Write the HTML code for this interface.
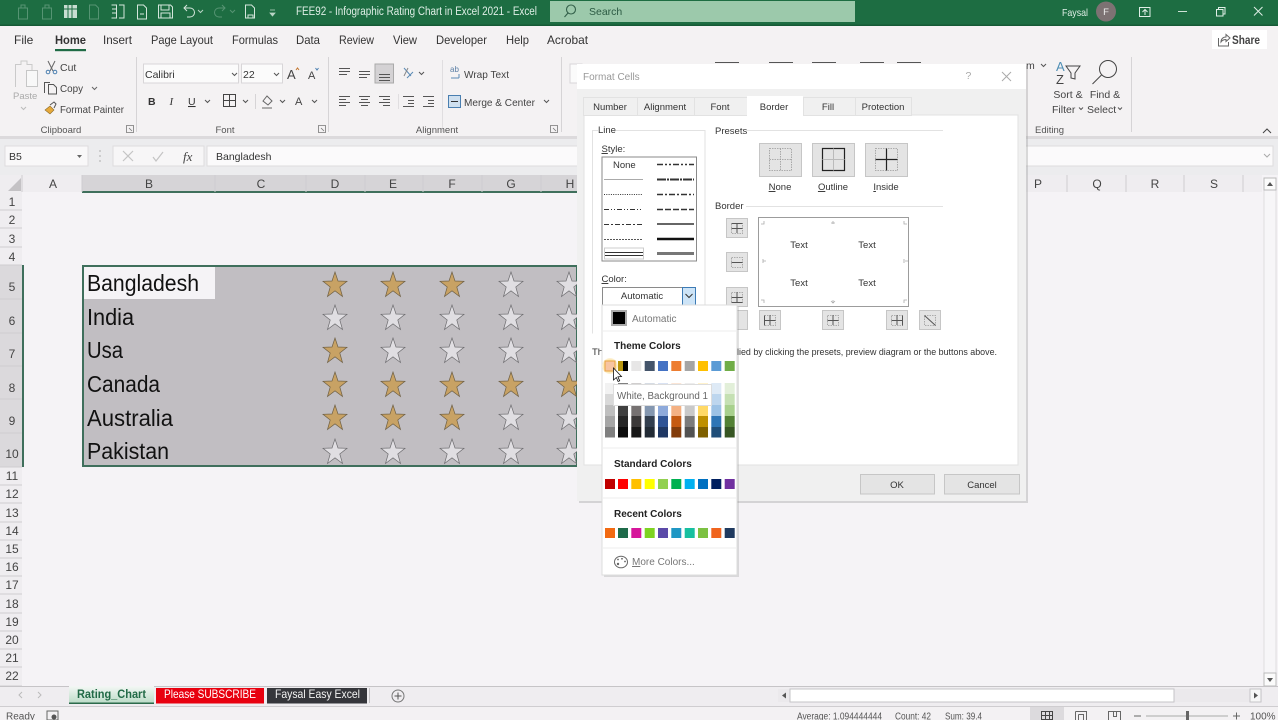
<!DOCTYPE html>
<html><head><meta charset="utf-8"><title>FEE92 - Infographic Rating Chart in Excel 2021 - Excel</title>
<style>
html,body{margin:0;padding:0;width:1278px;height:720px;overflow:hidden;background:#f5f3f6}
svg{display:block;filter:blur(.3px)}
text{font-family:"Liberation Sans",sans-serif;font-size:10.5px;fill:#3c3a3c}
.rb{font-size:10.5px;fill:#444}
.gp{font-size:9.5px;fill:#555}
.tab{font-size:12px;fill:#333}
.h{font-size:12px;fill:#444;text-anchor:middle}
.d{font-size:9.5px;fill:#333}
.c{text-anchor:middle}
.big{font-size:23px;fill:#111}
.ic{fill:none;stroke:#555;stroke-width:1}
.w{fill:none;stroke:#d5e6dc;stroke-width:1}
.f{fill:none;stroke:#569473;stroke-width:1}
.b{font-weight:bold;fill:#222;font-size:10px}
</style></head><body>
<svg width="1278" height="720" viewBox="0 0 1278 720" xmlns="http://www.w3.org/2000/svg">
<defs>
<polygon id="s" points="12,0 15,9 24,9.3 16.8,15 19.5,24.5 12,18.8 4.500,24.500 7.2,15 0,9.3 9,9"/>
<linearGradient id="tg" x1="0" y1="0" x2="0" y2="1"><stop offset="0" stop-color="#f4f7f5"/><stop offset="1" stop-color="#bcdcc8"/></linearGradient>
<radialGradient id="glow"><stop offset="0" stop-color="#f9c9a0"/><stop offset=".75" stop-color="#fbe6ae"/><stop offset="1" stop-color="#fdf3dc"/></radialGradient>
</defs>

<!-- sheet -->
<rect width="1278" height="720" fill="#f5f3f6"/>
<rect x="0" y="175" width="1264" height="17" fill="#efedf0"/>
<rect x="82" y="175" width="495" height="17" fill="#d6d4d7"/>
<rect x="82" y="191" width="495" height="2" fill="#3f6f5c"/>
<rect x="0" y="192" width="22" height="494" fill="#efedf0"/>
<rect x="0" y="265" width="22" height="202" fill="#dbd9dc"/>
<rect x="22" y="265" width="2" height="202" fill="#3f6f5c"/>
<polygon points="21,178 21,191 8,191" fill="#c4c2c5"/>
<g stroke="#cfcdd0" stroke-width="1">
<path d="M22 175V192M82 175V192M215 175V192M306 175V192M365 175V192M423 175V192M482 175V192M541 175V192M1008 175V192M1067 175V192M1126 175V192M1184 175V192M1243 175V192"/>
<path d="M0 210H22M0 228H22M0 247H22M0 265H22M0 299H22M0 333H22M0 366H22M0 399H22M0 433H22M0 467H22M0 485H22M0 503H22M0 522H22M0 540H22M0 558H22M0 576H22M0 594H22M0 613H22M0 631H22M0 649H22M0 667H22M0 686H22"/>
</g>
<g class="h">
<text class="h" x="53" y="188">A</text><text class="h" x="149" y="188">B</text><text class="h" x="261" y="188">C</text><text class="h" x="335" y="188">D</text><text class="h" x="393" y="188">E</text><text class="h" x="452" y="188">F</text><text class="h" x="511" y="188">G</text><text class="h" x="570" y="188">H</text><text class="h" x="1038" y="188">P</text><text class="h" x="1097" y="188">Q</text><text class="h" x="1155" y="188">R</text><text class="h" x="1214" y="188">S</text>
<text class="h" x="12" y="206">1</text><text class="h" x="12" y="224">2</text><text class="h" x="12" y="243">3</text><text class="h" x="12" y="261">4</text><text class="h" x="12" y="291">5</text><text class="h" x="12" y="325">6</text><text class="h" x="12" y="358">7</text><text class="h" x="12" y="392">8</text><text class="h" x="12" y="425">9</text><text class="h" x="12" y="458">10</text><text class="h" x="12" y="480">11</text><text class="h" x="12" y="498">12</text><text class="h" x="12" y="517">13</text><text class="h" x="12" y="535">14</text><text class="h" x="12" y="553">15</text><text class="h" x="12" y="571">16</text><text class="h" x="12" y="589">17</text><text class="h" x="12" y="608">18</text><text class="h" x="12" y="626">19</text><text class="h" x="12" y="644">20</text><text class="h" x="12" y="662">21</text><text class="h" x="12" y="680">22</text>
</g>
<rect x="83" y="266" width="494" height="200" fill="#c1bec2" stroke="#3f6f5c" stroke-width="2"/>
<rect x="84" y="267" width="131" height="32" fill="#f5f3f6"/>
<text class="big" x="87" y="291" textLength="112" lengthAdjust="spacingAndGlyphs">Bangladesh</text>
<text class="big" x="87" y="325" textLength="47" lengthAdjust="spacingAndGlyphs">India</text>
<text class="big" x="87" y="358" textLength="36" lengthAdjust="spacingAndGlyphs">Usa</text>
<text class="big" x="87" y="392" textLength="73" lengthAdjust="spacingAndGlyphs">Canada</text>
<text class="big" x="87" y="426" textLength="86" lengthAdjust="spacingAndGlyphs">Australia</text>
<text class="big" x="87" y="459" textLength="82" lengthAdjust="spacingAndGlyphs">Pakistan</text>
<g fill="#c8a264" stroke="#6f6045" stroke-width=".7">
<use href="#s" x="323" y="272"/><use href="#s" x="381" y="272"/><use href="#s" x="440" y="272"/>
<use href="#s" x="323" y="338"/>
<use href="#s" x="323" y="372"/><use href="#s" x="381" y="372"/><use href="#s" x="440" y="372"/><use href="#s" x="499" y="372"/><use href="#s" x="557" y="372"/>
<use href="#s" x="323" y="405"/><use href="#s" x="381" y="405"/><use href="#s" x="440" y="405"/>
</g>
<g fill="#e0dee2" stroke="#6e6d70" stroke-width=".7">
<use href="#s" x="499" y="272"/><use href="#s" x="557" y="272"/>
<use href="#s" x="323" y="305"/><use href="#s" x="381" y="305"/><use href="#s" x="440" y="305"/><use href="#s" x="499" y="305"/><use href="#s" x="557" y="305"/>
<use href="#s" x="381" y="338"/><use href="#s" x="440" y="338"/><use href="#s" x="499" y="338"/><use href="#s" x="557" y="338"/>
<use href="#s" x="499" y="405"/><use href="#s" x="557" y="405"/>
<use href="#s" x="323" y="439"/><use href="#s" x="381" y="439"/><use href="#s" x="440" y="439"/><use href="#s" x="499" y="439"/><use href="#s" x="557" y="439"/>
</g>

<!-- vertical scrollbar -->
<rect x="1262" y="175" width="16" height="511" fill="#f5f3f6"/>
<rect x="1264" y="178" width="12" height="508" fill="#f7f6f8" stroke="#cfcdd0" stroke-width=".6"/>
<rect x="1264" y="178" width="12" height="12" fill="#fbfbfb" stroke="#bbb"/>
<polygon points="1267,186 1273,186 1270,182" fill="#555"/>
<rect x="1264" y="673" width="12" height="13" fill="#fbfbfb" stroke="#bbb"/>
<polygon points="1267,678 1273,678 1270,682" fill="#555"/>

<!-- bottom -->
<rect x="0" y="686" width="1278" height="1.5" fill="#c6c4c7"/>
<rect x="0" y="687" width="1278" height="19" fill="#efedf0"/>
<rect x="0" y="706" width="1278" height="1" fill="#cfcdd0"/>
<rect x="0" y="707" width="1278" height="13" fill="#f3f1f3"/>
<path d="M22 692l-3 3 3 3M38 692l3 3-3 3" fill="none" stroke="#bbb" stroke-width="1"/>
<rect x="69" y="686" width="85" height="17" fill="url(#tg)"/>
<rect x="69" y="702.5" width="85" height="1.5" fill="#2c6a4b"/>
<text x="77" y="698" style="font-size:12px;font-weight:bold;fill:#216a46" textLength="69" lengthAdjust="spacingAndGlyphs">Rating_Chart</text>
<rect x="156" y="688" width="108" height="15.5" fill="#e8000f"/>
<text x="164" y="698" style="font-size:12px;fill:#fff" textLength="92" lengthAdjust="spacingAndGlyphs">Please SUBSCRIBE</text>
<rect x="267" y="688" width="100" height="15.5" fill="#35363b"/>
<text x="275" y="698" style="font-size:12px;fill:#f4f4f4" textLength="85" lengthAdjust="spacingAndGlyphs">Faysal Easy Excel</text>
<path d="M369.500 688V703" stroke="#c4c2c5"/>
<circle cx="398" cy="696" r="6" fill="none" stroke="#777"/>
<path d="M394.500 696H401.500M398 692.500V699.500" stroke="#555"/>
<rect x="778" y="689" width="484" height="13" fill="#ebe9ec"/>
<rect x="790" y="689" width="384" height="13" fill="#fff" stroke="#c6c4c7"/>
<polygon points="786,692.500 786,698.500 782,695.500" fill="#555"/>
<rect x="1250" y="689" width="11" height="13" fill="#f7f7f7" stroke="#c6c4c7"/>
<polygon points="1254,692.500 1254,698.500 1258,695.500" fill="#555"/>
<text x="6" y="719.500" style="font-size:10px;fill:#555">Ready</text>
<rect x="47" y="711" width="11" height="9" fill="none" stroke="#666"/><circle cx="54" cy="717" r="2.500" fill="#555"/>
<text x="797" y="719.500" style="font-size:10px;fill:#555" textLength="85" lengthAdjust="spacingAndGlyphs">Average: 1.094444444</text>
<text x="895" y="719.500" style="font-size:10px;fill:#555" textLength="36" lengthAdjust="spacingAndGlyphs">Count: 42</text>
<text x="945" y="719.500" style="font-size:10px;fill:#555" textLength="37" lengthAdjust="spacingAndGlyphs">Sum: 39.4</text>
<rect x="1030" y="707" width="34" height="13" fill="#dcdadd"/>
<path d="M1041.500 711.500H1052.500M1041.500 715.500H1052.500M1041.500 719.500H1052.500M1041.500 711V720M1045.500 711V720M1049.500 711V720M1052.500 711V720" stroke="#444" fill="none"/>
<path d="M1075.500 711.500H1086.500V720M1075.500 711.500V720M1078.500 714.500H1083.500V720M1078.500 714.500V720" stroke="#666" fill="none"/>
<path d="M1108.500 720V711.500H1120.500V720M1113.500 711.500V716.500H1116.500V711.500" stroke="#666" fill="none"/>
<path d="M1134 716H1141M1233 716H1240M1236.500 712.500V719.500" stroke="#666"/>
<rect x="1146" y="715.500" width="82" height="1" fill="#aaa"/>
<rect x="1186" y="711" width="3" height="9" fill="#666"/>
<text x="1250" y="719.500" style="font-size:10px;fill:#555">100%</text>

<!-- formula bar -->
<rect x="0" y="136" width="1278" height="39" fill="#ececee"/>
<rect x="0" y="136" width="1278" height="3" fill="#dcdadc"/>
<rect x="5" y="146" width="83" height="20" fill="#f9f8f9" stroke="#dedcde"/>
<text x="9" y="160" style="font-size:10.500px;fill:#333">B5</text>
<polygon points="77,155 82,155 79.500,158" fill="#666"/>
<path d="M100 150.500v1M100 155.500v1M100 160.500v1" stroke="#999" stroke-width="1.500"/>
<rect x="113" y="146" width="91" height="20" fill="#f7f6f7" stroke="#dedcde"/>
<path d="M123 151l10 10M133 151l-10 10" stroke="#c4c4c4" stroke-width="1.200"/>
<path d="M153 157l3 4 7-9" stroke="#c4c4c4" stroke-width="1.200" fill="none"/>
<text x="183" y="161" style="font-family:'Liberation Serif',serif;font-style:italic;font-size:13px;fill:#444">fx</text>
<rect x="207" y="146" width="1066" height="20" fill="#fbfafb" stroke="#dedcde"/>
<text x="216" y="160" style="font-size:10.500px;fill:#333">Bangladesh</text>
<path d="M1264 154l3 3 3-3" stroke="#aaa" fill="none"/>

<!-- ribbon -->
<rect x="0" y="26" width="1278" height="110" fill="#f4f2f3"/>
<g class="tab">
<text class="tab" x="14" y="44">File</text>
<text class="tab" x="55" y="44" style="font-weight:bold;fill:#333" textLength="31" lengthAdjust="spacingAndGlyphs">Home</text>
<text class="tab" x="103" y="44" textLength="29" lengthAdjust="spacingAndGlyphs">Insert</text>
<text class="tab" x="151" y="44" textLength="62" lengthAdjust="spacingAndGlyphs">Page Layout</text>
<text class="tab" x="232" y="44" textLength="46" lengthAdjust="spacingAndGlyphs">Formulas</text>
<text class="tab" x="296" y="44" textLength="24" lengthAdjust="spacingAndGlyphs">Data</text>
<text class="tab" x="339" y="44" textLength="35" lengthAdjust="spacingAndGlyphs">Review</text>
<text class="tab" x="393" y="44" textLength="24" lengthAdjust="spacingAndGlyphs">View</text>
<text class="tab" x="436" y="44" textLength="51" lengthAdjust="spacingAndGlyphs">Developer</text>
<text class="tab" x="506" y="44" textLength="23" lengthAdjust="spacingAndGlyphs">Help</text>
<text class="tab" x="547" y="44" textLength="41" lengthAdjust="spacingAndGlyphs">Acrobat</text>
</g>
<rect x="55" y="49" width="31" height="2.200" fill="#1f6b45"/>
<rect x="1212" y="30" width="55" height="19" fill="#fff"/>
<path d="M1218.500 38v8h10v-4M1221 42c0-3 2-5 5-5v-2.500l4 3.500-4 3.500v-2c-2 0-4 1-5 2.500z" fill="none" stroke="#666"/>
<text x="1232" y="44" style="font-size:12px;font-weight:bold;fill:#444" textLength="28" lengthAdjust="spacingAndGlyphs">Share</text>

<!-- Clipboard -->
<path d="M15.500 87V64.500H21V61h6v3.500h5V70" fill="none" stroke="#cacaca"/>
<rect x="26.500" y="70.500" width="11" height="16" fill="#f8f8f8" stroke="#c6c6c6"/>
<text x="13" y="99" style="font-size:9.500px;fill:#aaa">Paste</text>
<path d="M21 107l2.500 2.500 2.500-2.500" fill="none" stroke="#bbb"/>
<path d="M48 61l5 10M55 61l-5 10" fill="none" stroke="#666"/><circle cx="48" cy="72" r="1.800" fill="none" stroke="#4a7fb0"/><circle cx="55" cy="72" r="1.800" fill="none" stroke="#4a7fb0"/>
<text class="rb" x="60" y="71">Cut</text>
<path d="M44.500 93V82.500H50M48.500 84.500h5l3 3v6.500h-8z" fill="none" stroke="#555"/>
<text class="rb" x="60" y="92" textLength="23" lengthAdjust="spacingAndGlyphs">Copy</text>
<path d="M92 87l2.500 2.500 2.500-2.500" fill="none" stroke="#666"/>
<path d="M45 110l5-4 4 4-4 4z" fill="#e6a93a" stroke="#8a6a2a" stroke-width=".6"/><path d="M50 105l4-3 2 2-2 4" fill="none" stroke="#555"/>
<text class="rb" x="60" y="113" textLength="64" lengthAdjust="spacingAndGlyphs">Format Painter</text>
<text class="gp c" x="61" y="133">Clipboard</text>
<path d="M126.500 125.500h7v7h-7zM129 128l3 3" fill="none" stroke="#777" stroke-width=".8"/>
<path d="M136.500 57V132" stroke="#d6d4d6"/>

<!-- Font -->
<rect x="143.500" y="64" width="95" height="19" fill="#fbfbfb" stroke="#d8d6d8"/>
<text x="145" y="78" style="font-size:10.500px;fill:#333">Calibri</text>
<path d="M232 73l2.500 2.500 2.500-2.500" fill="none" stroke="#555"/>
<rect x="241.500" y="64" width="41" height="19" fill="#fbfbfb" stroke="#d8d6d8"/>
<text x="243" y="78" style="font-size:10.500px;fill:#333">22</text>
<path d="M274 73l2.500 2.500 2.500-2.500" fill="none" stroke="#555"/>
<text x="287" y="79" style="font-size:13px;fill:#444">A</text><path d="M296 70l1.500-2 1.500 2" stroke="#c2752d" fill="none"/>
<text x="308" y="79" style="font-size:11px;fill:#444">A</text><path d="M315.500 68l1.500 2 1.500-2" stroke="#4a7fb0" fill="none"/>
<text x="148" y="105" style="font-size:10.500px;font-weight:bold;fill:#333">B</text>
<text x="169.500" y="105" style="font-family:'Liberation Serif',serif;font-style:italic;font-size:11px;fill:#333">I</text>
<text x="188" y="105" style="font-size:10.500px;fill:#333;text-decoration:underline">U</text>
<path d="M205 100l2.500 2.500 2.500-2.500M243 100l2.500 2.500 2.500-2.500M280 100l2.500 2.500 2.500-2.500M312 100l2.500 2.500 2.500-2.500" fill="none" stroke="#555"/>
<path d="M223.500 94.500h12v12h-12zM229.500 94.500v12M223.500 100.500h12" fill="none" stroke="#444"/>
<path d="M255.500 94V109" stroke="#d6d4d6"/>
<path d="M267 96l5 5-4 4-5-4zM262 108h10" fill="none" stroke="#666"/>
<text x="295" y="105" style="font-size:11px;fill:#444">A</text>
<text class="gp c" x="225" y="133">Font</text>
<path d="M318.500 125.500h7v7h-7zM321 128l3 3" fill="none" stroke="#777" stroke-width=".8"/>
<path d="M328.500 57V132" stroke="#d6d4d6"/>

<!-- Alignment -->
<rect x="375" y="64" width="18.500" height="19" fill="#d4d2d4" stroke="#aaa"/>
<path class="ic" d="M339 68.500h11M339 71.500h11M339 74.500h8M359 71.500h11M359 74.500h11M359 77.500h8M379 74.500h11M379 77.500h11M379 80.500h11"/>
<path d="M404 68l7 8M407 78l6-6" fill="none" stroke="#5b8bb5"/><path d="M404 76l4-8" stroke="#888"/>
<path d="M419 72l2.500 2.500 2.500-2.500" fill="none" stroke="#555"/>
<path d="M442.500 60V132" stroke="#e0dee0"/>
<text x="450" y="72" style="font-size:8px;fill:#5b7fa5">ab</text><path d="M451 78h8M459 74v4" fill="none" stroke="#5b8bb5"/>
<text class="rb" x="464" y="78" textLength="45" lengthAdjust="spacingAndGlyphs">Wrap Text</text>
<path class="ic" d="M339 96.500h11M339 99.500h7M339 102.500h11M339 105.500h7M359 96.500h11M361 99.500h7M359 102.500h11M361 105.500h7M379 96.500h11M383 99.500h7M379 102.500h11M383 105.500h7M403 96.500h11M408 100.500h6M408 103.500h6M403 106.500h11M423 96.500h11M428 100.500h6M428 103.500h6M423 106.500h11"/>
<path d="M398.500 94V109" stroke="#e0dee0"/>
<path d="M448.500 95.500h12v12h-12z" fill="#cfe0ef" stroke="#4a7fb0"/><path d="M451 101.500h7" stroke="#333"/>
<text class="rb" x="464" y="106" textLength="71" lengthAdjust="spacingAndGlyphs">Merge &amp; Center</text>
<path d="M544 100l2.500 2.500 2.500-2.500" fill="none" stroke="#555"/>
<text class="gp c" x="437" y="133">Alignment</text>
<path d="M550.500 125.500h7v7h-7zM553 128l3 3" fill="none" stroke="#777" stroke-width=".8"/>
<path d="M561.500 57V132" stroke="#d6d4d6"/>
<rect x="570" y="64" width="12" height="19" fill="#fbfbfb" stroke="#d8d6d8"/>

<!-- hidden bits above dialog -->
<path d="M715 62.500h24M769 62.500h24M812 62.500h24M860 62.500h24M897 62.500h24" stroke="#555" stroke-width="1"/>

<!-- Editing -->
<text x="1026" y="69" style="font-size:10.500px;fill:#444">m</text>
<path d="M1041 64l2.500 2.500 2.500-2.500" fill="none" stroke="#555"/>
<text x="1056" y="71" style="font-size:13px;fill:#4f8fb5">A</text>
<text x="1056" y="84" style="font-size:13px;fill:#444">Z</text>
<path d="M1066 66h14l-5 7v6l-4-1v-5z" fill="none" stroke="#444"/>
<circle cx="1108" cy="69" r="8.500" fill="none" stroke="#444"/><path d="M1101.500 75l-9 9" stroke="#444" fill="none"/>
<text class="rb c" x="1068" y="98">Sort &amp;</text>
<text class="rb" x="1052" y="113">Filter</text>
<path d="M1079 107.500l2 2 2-2" fill="none" stroke="#555"/>
<text class="rb c" x="1105" y="98">Find &amp;</text>
<text class="rb" x="1087" y="113">Select</text>
<path d="M1118 107.500l2 2 2-2" fill="none" stroke="#555"/>
<text class="gp" x="1035" y="133">Editing</text>
<path d="M1131.500 57V132" stroke="#d6d4d6"/>
<path d="M1263 133l4-4 4 4" fill="none" stroke="#444"/>

<!-- title bar -->
<rect x="0" y="0" width="1278" height="26" fill="#1d6d42"/>
<rect x="0" y="24.500" width="1278" height="1.500" fill="#165a36"/>
<g class="f">
<path class="f" d="M18.500 8h9v11h-9zM21 8V5h4v3"/>
<path class="f" d="M42.500 8h9v11h-9zM45 8V5h4v3"/>
<path class="f" d="M89.500 5h6l3 3v11h-9z"/>
<path class="f" d="M225 8h-6a4.500 4.500 0 0 0 0 9h3M222 5l3 3-3 3"/>
</g>
<rect x="64" y="5" width="13" height="13" fill="#c8ddd1"/><path d="M64 9h13M68 5v13M72 5v13" stroke="#1d6d42"/>
<path class="w" d="M111.500 5h5v13h-5M119 5h5v13h-5M112 9h4M112 13h4"/>
<path class="w" d="M137.500 5h6l3 3v11h-9zM140 14h4"/>
<path class="w" d="M158.500 5h12l2 2v11h-14zM161 5v5h8V5M161 18v-5h9v5"/>
<path class="w" d="M184 8h6a4.500 4.500 0 0 1 0 9h-3M187 5l-3 3 3 3"/>
<path d="M198 10l2.500 2.500 2.500-2.500" stroke="#b9d4c5" fill="none"/>
<path d="M230 10l2.500 2.500 2.500-2.500" stroke="#569473" fill="none"/>
<path class="w" d="M245.500 5h6l3 3v10h-9zM248 15h5v3h-5z"/>
<path d="M270 13h5l-2.500 3zM270 10h5" stroke="#b9d4c5" fill="#b9d4c5" stroke-width=".8"/>
<text x="296" y="15" style="font-size:11.500px;fill:#dfeee6" textLength="241" lengthAdjust="spacingAndGlyphs">FEE92 - Infographic Rating Chart in Excel 2021  -  Excel</text>
<rect x="550" y="1" width="305" height="21" fill="#9cc9ab"/>
<circle cx="571" cy="9.500" r="4.500" fill="none" stroke="#33604a" stroke-width="1.100"/><path d="M568 13l-3.500 4" stroke="#33604a" stroke-width="1.100"/>
<text x="589" y="15" style="font-size:10.500px;fill:#2c5a43">Search</text>
<text x="1062" y="16" style="font-size:10.500px;fill:#dfeee6" textLength="26" lengthAdjust="spacingAndGlyphs">Faysal</text>
<circle cx="1106" cy="11.500" r="10" fill="#7d7273"/>
<text x="1106" y="15" style="font-size:9.500px;fill:#eee;text-anchor:middle">F</text>
<path d="M1139.500 7.500h10.500v9h-10.500zM1145 15v-5M1142.500 12l2.500-2.500 2.500 2.500" fill="none" stroke="#dfeee6"/>
<path d="M1178 11.500h9" stroke="#cfe2d7"/>
<path d="M1216.500 9.500h6.500v6.500h-6.500zM1218.500 9.500v-2h6.500v6.500h-2" fill="none" stroke="#dfeee6"/>
<path d="M1254 7l8.500 8.500M1262.500 7l-8.500 8.500" stroke="#dfeee6"/>

<!-- dialog -->
<rect x="579" y="66" width="449" height="437" fill="#999" opacity=".35"/>
<rect x="577" y="64" width="449" height="437" fill="#f0f0f0"/>
<rect x="577" y="64" width="449" height="25" fill="#fff"/>
<text x="583" y="80" style="font-size:10px;fill:#999">Format Cells</text>
<text x="965.500" y="79" style="font-size:10.500px;fill:#aaa">?</text>
<path d="M1002 72l9 9M1011 72l-9 9" stroke="#aaa"/>
<rect x="584" y="115" width="434" height="350" fill="#fff" stroke="#e2e2e2"/>
<rect x="583.500" y="97.500" width="54" height="18" fill="#f0f0f0" stroke="#e2e2e2"/>
<rect x="637.500" y="97.500" width="57" height="18" fill="#f0f0f0" stroke="#e2e2e2"/>
<rect x="694.500" y="97.500" width="53" height="18" fill="#f0f0f0" stroke="#e2e2e2"/>
<rect x="803.500" y="97.500" width="52" height="18" fill="#f0f0f0" stroke="#e2e2e2"/>
<rect x="855.500" y="97.500" width="56" height="18" fill="#f0f0f0" stroke="#e2e2e2"/>
<rect x="747" y="96" width="56" height="21" fill="#fff"/>
<g>
<text class="d c" x="610" y="110">Number</text><text class="d c" x="665" y="110">Alignment</text><text class="d c" x="720" y="110">Font</text><text class="d c" x="774" y="110">Border</text><text class="d c" x="828" y="110">Fill</text><text class="d c" x="883" y="110">Protection</text>
</g>
<!-- Line -->
<path d="M598 130.500h-5.500v203M613 130.500h92V333" fill="none" stroke="#e2e2e2"/>
<text class="d" x="598" y="133">Line</text>
<text class="d" x="601.500" y="152"><tspan text-decoration="underline">S</tspan>tyle:</text>
<rect x="602" y="157" width="94.500" height="104" fill="#fff" stroke="#8a8a8a"/>
<text class="d" x="613" y="168">None</text>
<g stroke="#333" fill="none">
<path d="M604 179.500h39" stroke="#aaa"/>
<path d="M604 194.500h39" stroke-dasharray="1 1.300"/>
<path d="M604 209.500h39" stroke-dasharray="5 2 1 2 1 2"/>
<path d="M604 224.500h39" stroke-dasharray="5 2 2 2"/>
<path d="M604 239.500h39" stroke-dasharray="2 1" stroke="#555"/>
<rect x="604.500" y="248" width="39" height="11" fill="#fff" stroke="#ccc"/>
<path d="M605 252.500h38M605 255.500h38" stroke="#333"/>
<path d="M657 164.500h37" stroke-width="1.500" stroke-dasharray="6 2 2 2 2 2"/>
<path d="M657 179.500h37" stroke-width="2" stroke-dasharray="9 1 2 1"/>
<path d="M657 194.500h37" stroke-width="1.500" stroke-dasharray="6 2 2 2"/>
<path d="M657 209.500h37" stroke-width="1.500" stroke-dasharray="6 2"/>
<path d="M657 224h37" stroke-width="1.500"/>
<path d="M657 239h37" stroke-width="2.500" stroke="#111"/>
<path d="M657 253.500h37" stroke-width="3" stroke="#777"/>
</g>
<text class="d" x="601.500" y="282"><tspan text-decoration="underline">C</tspan>olor:</text>
<rect x="602.500" y="287.500" width="93" height="18" fill="#fff" stroke="#8a8a8a"/>
<text class="d c" x="642" y="299">Automatic</text>
<rect x="682.500" y="287.500" width="13" height="18" fill="#cde4f7" stroke="#3d7bb5"/>
<path d="M685.500 294l3.500 3.500 3.500-3.500" fill="none" stroke="#333"/>
<!-- Presets -->
<text class="d" x="715" y="134">Presets</text><path d="M746 130.500H943" stroke="#e2e2e2"/>
<text class="d" x="715" y="209">Border</text><path d="M746 206.500H943" stroke="#e2e2e2"/>
<g fill="#e4e4e4" stroke="#c6c6c6">
<rect x="759.500" y="143.500" width="42" height="33"/><rect x="812.500" y="143.500" width="42" height="33"/><rect x="865.500" y="143.500" width="42" height="33"/>
<rect x="726.500" y="218.500" width="21" height="19"/><rect x="726.500" y="252.500" width="21" height="19"/><rect x="726.500" y="287.500" width="21" height="19"/>
<rect x="736.500" y="310.500" width="11" height="19"/><rect x="759.500" y="310.500" width="21" height="19"/><rect x="822.500" y="310.500" width="21" height="19"/><rect x="886.500" y="310.500" width="21" height="19"/><rect x="919.500" y="310.500" width="21" height="19"/>
</g>
<g fill="none" stroke="#999" stroke-width=".8">
<path d="M769.500 148.500h22v22h-22zM780.500 148.500v22M769.500 159.500h22" stroke-dasharray="1.500 1"/>
<path d="M875.500 148.500h22v22h-22z" stroke-dasharray="1.500 1"/>
<path d="M731.500 223.500h11v10h-11zM731.500 257.500h11v10h-11zM731.500 292.500h11v10h-11zM764.500 315.500h11v10h-11zM827.500 315.500h11v10h-11zM891.500 315.500h11v10h-11zM924.500 315.500h11v10h-11z" stroke-dasharray="1.500 1"/>
</g>
<path d="M822.500 148.500h22v22h-22z" fill="none" stroke="#222" stroke-width="1.200"/>
<path d="M833.500 148.500v22M822.500 159.500h22" fill="none" stroke="#bbb"/>
<path d="M886.500 148.500v22M875.500 159.500h22" fill="none" stroke="#222" stroke-width="1.200"/>
<path d="M731.500 223.500h11M731.500 228.500h11M737 223v10M731.500 262.500h11M731.500 297.500h11M731.500 302.500h11M737 292v10M764.500 320.500h11M770 315v10M764.500 315.500v10M833 315v10M827.500 320.500h11M902.500 315.500v10M897 315v10M891.500 320.500h11M924.500 315.500l11 10" fill="none" stroke="#555"/>
<text class="d c" x="780" y="190"><tspan text-decoration="underline">N</tspan>one</text><text class="d c" x="833" y="190"><tspan text-decoration="underline">O</tspan>utline</text><text class="d c" x="886" y="190"><tspan text-decoration="underline">I</tspan>nside</text>
<rect x="758.500" y="217.500" width="150" height="89" fill="#fff" stroke="#9c9c9c"/>
<text class="d c" x="799" y="248">Text</text><text class="d c" x="867" y="248">Text</text><text class="d c" x="799" y="286">Text</text><text class="d c" x="867" y="286">Text</text>
<path d="M764 221v3h-3M833 221v3M831 223h4M904 221v3h3M763 261h3M763 263v-4M905 261h3M904 263v-4M764 303v-3h-3M833 300v3M831 301l2 2 2-2M904 303v-3h3" fill="none" stroke="#aaa" stroke-width=".8"/>
<text class="d" x="592" y="355">Th</text>
<text class="d" x="737" y="355" textLength="260" lengthAdjust="spacingAndGlyphs">lied by clicking the presets, preview diagram or the buttons above.</text>
<rect x="860.500" y="474.500" width="74" height="19.500" fill="#e4e4e4" stroke="#c6c6c6"/>
<rect x="944.500" y="474.500" width="75" height="19.500" fill="#e4e4e4" stroke="#c6c6c6"/>
<text class="d c" x="897" y="488">OK</text><text class="d c" x="982" y="488">Cancel</text>

<!-- palette -->
<rect x="604" y="307" width="135" height="270" fill="#888" opacity=".25"/>
<rect x="602" y="305" width="135" height="270" fill="#fff" stroke="#dcdcdc"/>
<rect x="612" y="311" width="14" height="14" fill="#000" stroke="#aaa" stroke-width="2"/>
<text x="632" y="322" style="font-size:10px;fill:#777">Automatic</text>
<path d="M603 331h133M603 448h133M603 498h133M603 548h133" stroke="#eee"/>
<text class="b" x="614" y="349">Theme Colors</text>
<text class="b" x="614" y="467">Standard Colors</text>
<text class="b" x="614" y="517">Recent Colors</text>
<circle cx="610" cy="366" r="8" fill="url(#glow)"/>
<g>
<rect x="605" y="361" width="10" height="10" fill="#f7c4a2" stroke="#e8a23c"/>
<rect x="618" y="361" width="5" height="10" fill="#b8950f"/><rect x="623" y="361" width="5" height="10" fill="#000"/>
<rect x="631.300" y="361" width="10" height="10" fill="#e7e6e6"/><rect x="644.700" y="361" width="10" height="10" fill="#44546a"/><rect x="658" y="361" width="10" height="10" fill="#4472c4"/><rect x="671.300" y="361" width="10" height="10" fill="#ed7d31"/><rect x="684.700" y="361" width="10" height="10" fill="#a5a5a5"/><rect x="698" y="361" width="10" height="10" fill="#ffc000"/><rect x="711.300" y="361" width="10" height="10" fill="#5b9bd5"/><rect x="724.700" y="361" width="10" height="10" fill="#70ad47"/>
</g>
<g>
<rect x="605" y="383" width="10" height="11" fill="#f2f2f2"/><rect x="605" y="394" width="10" height="11" fill="#d9d9d9"/><rect x="605" y="405" width="10" height="11" fill="#bfbfbf"/><rect x="605" y="416" width="10" height="11" fill="#a6a6a6"/><rect x="605" y="427" width="10" height="10.500" fill="#808080"/>
<rect x="618" y="383" width="10" height="11" fill="#808080"/><rect x="618" y="394" width="10" height="11" fill="#595959"/><rect x="618" y="405" width="10" height="11" fill="#404040"/><rect x="618" y="416" width="10" height="11" fill="#262626"/><rect x="618" y="427" width="10" height="10.500" fill="#0d0d0d"/>
<rect x="631.300" y="383" width="10" height="11" fill="#d0cece"/><rect x="631.300" y="394" width="10" height="11" fill="#afabab"/><rect x="631.300" y="405" width="10" height="11" fill="#767171"/><rect x="631.300" y="416" width="10" height="11" fill="#3b3838"/><rect x="631.300" y="427" width="10" height="10.500" fill="#181717"/>
<rect x="644.700" y="383" width="10" height="11" fill="#d6dce4"/><rect x="644.700" y="394" width="10" height="11" fill="#adb9ca"/><rect x="644.700" y="405" width="10" height="11" fill="#8497b0"/><rect x="644.700" y="416" width="10" height="11" fill="#333f4f"/><rect x="644.700" y="427" width="10" height="10.500" fill="#222b35"/>
<rect x="658" y="383" width="10" height="11" fill="#d9e2f3"/><rect x="658" y="394" width="10" height="11" fill="#b4c6e7"/><rect x="658" y="405" width="10" height="11" fill="#8eaadb"/><rect x="658" y="416" width="10" height="11" fill="#2f5496"/><rect x="658" y="427" width="10" height="10.500" fill="#1f3864"/>
<rect x="671.300" y="383" width="10" height="11" fill="#fbe5d5"/><rect x="671.300" y="394" width="10" height="11" fill="#f7caac"/><rect x="671.300" y="405" width="10" height="11" fill="#f4b183"/><rect x="671.300" y="416" width="10" height="11" fill="#c55a11"/><rect x="671.300" y="427" width="10" height="10.500" fill="#833c0b"/>
<rect x="684.700" y="383" width="10" height="11" fill="#ededed"/><rect x="684.700" y="394" width="10" height="11" fill="#dbdbdb"/><rect x="684.700" y="405" width="10" height="11" fill="#c9c9c9"/><rect x="684.700" y="416" width="10" height="11" fill="#7b7b7b"/><rect x="684.700" y="427" width="10" height="10.500" fill="#525252"/>
<rect x="698" y="383" width="10" height="11" fill="#fff2cc"/><rect x="698" y="394" width="10" height="11" fill="#fee599"/><rect x="698" y="405" width="10" height="11" fill="#ffd966"/><rect x="698" y="416" width="10" height="11" fill="#bf9000"/><rect x="698" y="427" width="10" height="10.500" fill="#7f6000"/>
<rect x="711.300" y="383" width="10" height="11" fill="#deeaf6"/><rect x="711.300" y="394" width="10" height="11" fill="#bdd6ee"/><rect x="711.300" y="405" width="10" height="11" fill="#9cc2e5"/><rect x="711.300" y="416" width="10" height="11" fill="#2e75b5"/><rect x="711.300" y="427" width="10" height="10.500" fill="#1f4e79"/>
<rect x="724.700" y="383" width="10" height="11" fill="#e2efd9"/><rect x="724.700" y="394" width="10" height="11" fill="#c5e0b3"/><rect x="724.700" y="405" width="10" height="11" fill="#a8d08d"/><rect x="724.700" y="416" width="10" height="11" fill="#538135"/><rect x="724.700" y="427" width="10" height="10.500" fill="#375623"/>
</g>
<g>
<rect x="605" y="479" width="10" height="10" fill="#c00000"/><rect x="618" y="479" width="10" height="10" fill="#ff0000"/><rect x="631.300" y="479" width="10" height="10" fill="#ffc000"/><rect x="644.700" y="479" width="10" height="10" fill="#ffff00"/><rect x="658" y="479" width="10" height="10" fill="#92d050"/><rect x="671.300" y="479" width="10" height="10" fill="#00b050"/><rect x="684.700" y="479" width="10" height="10" fill="#00b0f0"/><rect x="698" y="479" width="10" height="10" fill="#0070c0"/><rect x="711.300" y="479" width="10" height="10" fill="#002060"/><rect x="724.700" y="479" width="10" height="10" fill="#7030a0"/>
<rect x="605" y="528" width="10" height="10" fill="#f26a12"/><rect x="618" y="528" width="10" height="10" fill="#1e6b4a"/><rect x="631.300" y="528" width="10" height="10" fill="#d6169b"/><rect x="644.700" y="528" width="10" height="10" fill="#7ed321"/><rect x="658" y="528" width="10" height="10" fill="#5b4aa8"/><rect x="671.300" y="528" width="10" height="10" fill="#1f97c4"/><rect x="684.700" y="528" width="10" height="10" fill="#17c0a0"/><rect x="698" y="528" width="10" height="10" fill="#7cc142"/><rect x="711.300" y="528" width="10" height="10" fill="#f0641e"/><rect x="724.700" y="528" width="10" height="10" fill="#1f3a5f"/>
</g>
<ellipse cx="621" cy="562" rx="6.500" ry="5.800" fill="none" stroke="#666"/>
<circle cx="618" cy="559.500" r=".9" fill="#666"/><circle cx="622" cy="558.800" r=".9" fill="#666"/><circle cx="625" cy="561.500" r=".9" fill="#666"/><circle cx="618" cy="564" r="1.200" fill="#666"/>
<text x="632" y="565" style="font-size:10px;fill:#777"><tspan text-decoration="underline">M</tspan>ore Colors...</text>
<!-- tooltip -->
<rect x="613.500" y="384.500" width="98" height="21" fill="#fff" stroke="#ddd"/>
<text x="617" y="399" style="font-size:10px;fill:#666" textLength="91" lengthAdjust="spacingAndGlyphs">White, Background 1</text>
<!-- cursor -->
<path d="M613.500 368v12l2.800-2.500 1.800 4 1.600-.7-1.800-4 3.600-.3z" fill="#fff" stroke="#111" stroke-width=".8"/>
</svg>
</body></html>
